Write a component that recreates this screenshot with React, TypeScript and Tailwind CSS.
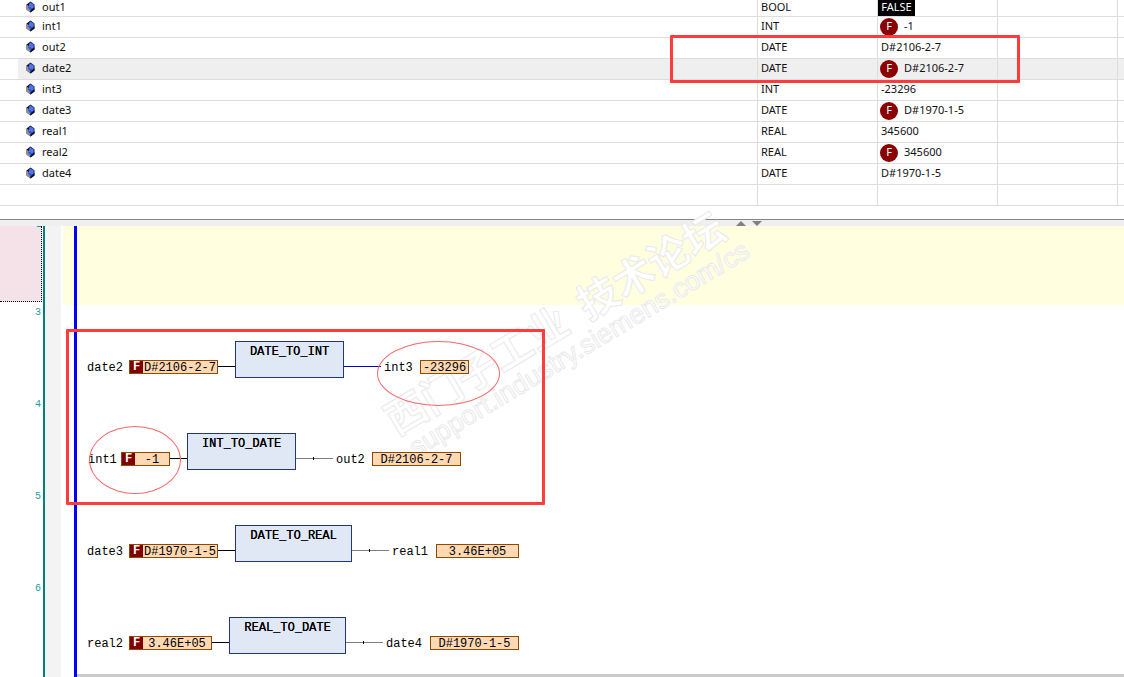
const rows = [
  { name: 'out1', type: 'BOOL', value: 'FALSE', kind: 'black', h: 'h-[17px]' },
  { name: 'int1', type: 'INT', value: '-1', kind: 'forced' },
  { name: 'out2', type: 'DATE', value: 'D#2106-2-7' },
  { name: 'date2', type: 'DATE', value: 'D#2106-2-7', kind: 'forced', selected: true },
  { name: 'int3', type: 'INT', value: '-23296' },
  { name: 'date3', type: 'DATE', value: 'D#1970-1-5', kind: 'forced' },
  { name: 'real1', type: 'REAL', value: '345600' },
  { name: 'real2', type: 'REAL', value: '345600', kind: 'forced' },
  { name: 'date4', type: 'DATE', value: 'D#1970-1-5' },
];

// positions of the FBD nodes, the diagram is a free canvas
const labels = [
  { text: 'date2', x: 87, y: 361 },
  { text: 'int3', x: 384, y: 361 },
  { text: 'int1', x: 88, y: 453 },
  { text: 'out2', x: 336, y: 453 },
  { text: 'date3', x: 87, y: 545 },
  { text: 'real1', x: 392, y: 545 },
  { text: 'real2', x: 87, y: 637 },
  { text: 'date4', x: 386, y: 637 },
];

const values = [
  { text: 'D#2106-2-7', x: 129, y: 360, w: 89, forced: true, left: true },
  { text: '-23296', x: 420, y: 360, w: 49 },
  { text: '-1', x: 121, y: 452, w: 49, forced: true },
  { text: 'D#2106-2-7', x: 372, y: 452, w: 89 },
  { text: 'D#1970-1-5', x: 129, y: 544, w: 89, forced: true, left: true },
  { text: '3.46E+05', x: 436, y: 544, w: 83 },
  { text: '3.46E+05', x: 129, y: 636, w: 83, forced: true },
  { text: 'D#1970-1-5', x: 430, y: 636, w: 89 },
];

const blocks = [
  { text: 'DATE_TO_INT', x: 235, y: 341, w: 109 },
  { text: 'INT_TO_DATE', x: 187, y: 433, w: 109 },
  { text: 'DATE_TO_REAL', x: 235, y: 525, w: 117 },
  { text: 'REAL_TO_DATE', x: 229, y: 617, w: 117 },
];

const wires = [
  { x: 218, y: 366, w: 17, color: '#000000' },
  { x: 344, y: 366, w: 37, color: '#0000c8' },
  { x: 170, y: 458, w: 17, color: '#000000' },
  { x: 296, y: 458, w: 37, color: '#808080', tick: true },
  { x: 218, y: 550, w: 17, color: '#000000' },
  { x: 352, y: 550, w: 37, color: '#808080', tick: true },
  { x: 212, y: 642, w: 17, color: '#000000' },
  { x: 346, y: 642, w: 37, color: '#808080', tick: true },
];

const lineNumbers = [
  { n: '3', y: 307 },
  { n: '4', y: 399 },
  { n: '5', y: 491 },
  { n: '6', y: 583 },
];

function VarIcon() {
  return (
    <svg width="9" height="12" viewBox="0 0 9 12" className="shrink-0">
      <path d="M4.5 0.5 8.5 3.5v5l-4 3-4-3v-5z" fill="#15151f" />
      <path d="M0.5 3.5 4.5 6.5v5l-4-3z" fill="#8f8f98" />
      <path d="M4.5 1 8 3.6 8 7 4.5 9.5 2 6.5z" fill="#2f55e0" />
      <path d="M3.5 3h1M5.5 4h1M3.5 5h1M5.5 6h1" stroke="#c4d2ff" strokeWidth="1" />
      <path d="M8.5 6v2.5l-4 3v-2z" fill="#15151f" />
    </svg>
  );
}

function ValueCell({ value, kind }: { value: string; kind?: string }) {
  if (kind === 'black') {
    return <span className="flex h-4 w-[37px] items-center justify-center bg-black text-white">{value}</span>;
  }
  if (kind === 'forced') {
    return (
      <div className="flex items-center pl-[2px]">
        <span className="flex h-[18px] w-[18px] items-center justify-center rounded-full bg-[#8b0000] text-white">F</span>
        <span className="ml-[6px]">{value}</span>
      </div>
    );
  }
  return <span className="pl-[3px]">{value}</span>;
}

function VarTable() {
  return (
    <div className="h-[219px] bg-white font-['Noto_Sans','Liberation_Sans',sans-serif] text-[11px] text-[#111]">
      {rows.map((r) => (
        <div key={r.name} className={`flex border-b border-[#dddddd] ${r.h ?? 'h-[21px]'}`}>
          <div className="flex w-[18px] shrink-0" />
          <div className={`flex flex-1 ${r.selected ? 'bg-[#efefef]' : ''}`}>
            <div className="flex w-[740px] shrink-0 items-center gap-[7px] border-r border-[#dddddd] pb-[2px] pl-[8px]">
              <VarIcon />
              <span>{r.name}</span>
            </div>
            <div className="flex w-[120px] shrink-0 items-center border-r border-[#dddddd] pb-[2px] pl-[3px]">{r.type}</div>
            <div className="flex w-[120px] shrink-0 items-center border-r border-[#dddddd] pb-[1px]">
              <ValueCell value={r.value} kind={r.kind} />
            </div>
            <div className="w-[120px] shrink-0 border-r border-[#dddddd]" />
            <div className="flex-1" />
          </div>
        </div>
      ))}
      <div className="flex h-[21px] border-b border-[#dddddd] pl-[18px]">
        <div className="w-[740px] shrink-0 border-r border-[#dddddd]" />
        <div className="w-[120px] shrink-0 border-r border-[#dddddd]" />
        <div className="w-[120px] shrink-0 border-r border-[#dddddd]" />
        <div className="w-[120px] shrink-0 border-r border-[#dddddd]" />
      </div>
    </div>
  );
}

function Splitter() {
  return (
    <div className="flex h-[7px] justify-end gap-[6px] border-t border-[#85858f] bg-[#efefef] pr-[362px] pt-px">
      <div className="h-0 w-0 border-x-[5px] border-b-[5px] border-x-transparent border-b-[#808080]" />
      <div className="h-0 w-0 border-x-[5px] border-t-[5px] border-x-transparent border-t-[#808080]" />
    </div>
  );
}

function Gutter() {
  return (
    <div className="flex h-full w-[63px] shrink-0">
      <div className="relative w-[43px] bg-white">
        <div className="h-[76px] w-[42px] border-b border-r border-dotted border-black bg-[#f5e1e8]" />
        {/* only the foot of line number 2 is still visible under the splitter */}
        <div className="absolute right-[2px] top-0 h-px w-[4px] bg-[#1d9aa8]" />
        {lineNumbers.map((l) => (
          <span key={l.n} className="absolute right-[2px] font-['Liberation_Mono',monospace] text-[10px] leading-[12px] text-[#1d9aa8]" style={{ top: l.y - 226 }}>
            {l.n}
          </span>
        ))}
      </div>
      <div className="w-[2px] bg-[#008080]" />
      <div className="w-[16px] bg-[#f3f3f3]" />
      <div className="w-[2px] bg-white" />
    </div>
  );
}

function Diagram() {
  return (
    <>
      {wires.map((w) => (
        <div key={`${w.x}-${w.y}`} className="absolute h-px" style={{ left: w.x, top: w.y, width: w.w, background: w.color }}>
          {w.tick && <div className="absolute -top-px left-[17px] h-[3px] w-px bg-black" />}
        </div>
      ))}
      {labels.map((l) => (
        <span key={l.text} className="absolute text-[12px] leading-[14px]" style={{ left: l.x, top: l.y }}>
          {l.text}
        </span>
      ))}
      {values.map((v) => (
        <div
          key={`${v.x}-${v.y}`}
          className="absolute flex h-[14px] items-center border border-[#8f4a00] bg-[#ffd9b3] text-[12px] leading-[12px]"
          style={{ left: v.x, top: v.y, width: v.w }}
        >
          {v.forced && <span className="h-full w-[13px] shrink-0 bg-[#800000] text-center font-bold text-white">F</span>}
          <span className={`flex-1 whitespace-nowrap pt-px ${v.left ? 'pl-px text-left' : 'text-center'}`}>{v.text}</span>
        </div>
      ))}
      {blocks.map((b) => (
        <div
          key={b.text}
          className="absolute h-[37px] border border-[#1f3a73] bg-[#e1e8f5] text-center text-[12px] leading-[20px] [text-shadow:0.2px_0_0_#000]"
          style={{ left: b.x, top: b.y, width: b.w }}
        >
          {b.text}
        </div>
      ))}
    </>
  );
}

function Annotations() {
  return (
    <>
      <div className="absolute left-[670px] top-[35px] h-[48px] w-[350px] rounded-[1px] border-[3px] border-[#ff3b3b]" />
      <div className="absolute left-[66px] top-[329px] h-[176px] w-[479px] rounded-[1px] border-[3px] border-[#ff3b3b]" />
      <div className="absolute left-[377px] top-[341px] h-[65px] w-[123px] rounded-[50%] border border-[#f56a6a]" />
      <div className="absolute left-[89px] top-[426px] h-[68px] w-[92px] rounded-[50%] border border-[#f56a6a]" />
    </>
  );
}

function Watermark() {
  return (
    <div className="pointer-events-none absolute left-[376px] top-[402px] origin-top-left -rotate-[31deg] whitespace-nowrap">
      <div className="font-['Noto_Sans_CJK_SC',sans-serif] text-[41px] font-bold leading-[44px] text-white [-webkit-text-stroke:1px_#eaeaea]">
        西门子工业&nbsp;&nbsp;技术论坛
      </div>
      <div className="pl-[6px] font-['Liberation_Sans',sans-serif] text-[27px] leading-[30px] text-white [-webkit-text-stroke:1px_#eaeaea]">
        support.industry.siemens.com/cs
      </div>
    </div>
  );
}

export default function App() {
  return (
    <div className="relative flex h-[677px] w-[1124px] flex-col overflow-hidden bg-white">
      <VarTable />
      <Splitter />
      <div className="flex flex-1">
        <Gutter />
        <div className="flex flex-1 flex-col">
          <div className="h-[79px] bg-[#ffffdf]" />
          <div className="flex-1" />
        </div>
      </div>
      <div className="absolute left-[74px] top-[226px] h-[451px] w-[3px] bg-[#0000ff]" />
      <div className="absolute bottom-0 left-[77px] h-[3px] w-[1047px] bg-[#cccccc]" />
      <Watermark />
      <div className="font-['Liberation_Mono',monospace] text-black">
        <Diagram />
      </div>
      <Annotations />
    </div>
  );
}
